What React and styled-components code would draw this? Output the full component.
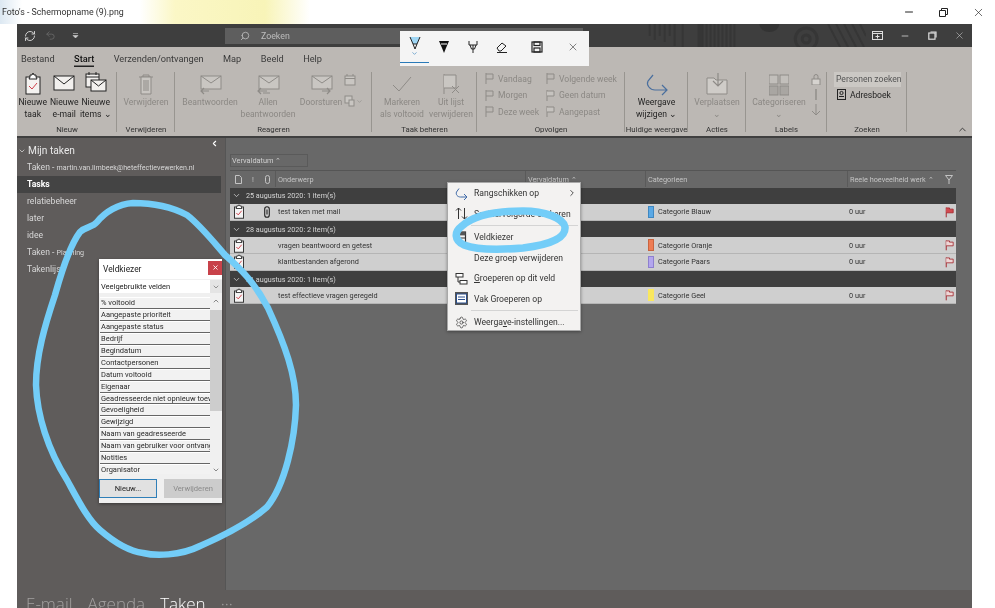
import styled, { createGlobalStyle } from "styled-components";
import { ChevronDown, ChevronLeft, ChevronRight, ChevronUp, Minus, RefreshCw, Search, Settings, Undo2, X } from "lucide-react";

const GlobalStyle = createGlobalStyle`
  html, body { margin: 0; padding: 0; background: #fff; }
  body { font-family: Roboto, "Liberation Sans", sans-serif; }
  * { box-sizing: border-box; }
`;

const Page = styled.div`
  position: relative;
  width: 995px;
  height: 608px;
  overflow: hidden;
  background: #fff;
  filter: blur(.3px);
`;

const PhotoBar = styled.div`
  height: 24px;
  display: flex;
  align-items: center;
  justify-content: space-between;
  padding: 0 10px 0 2px;
  color: #333;
  font-size: 8.8px;
  background: linear-gradient(90deg, #dce8f2 0, #fff 22px, #fff 140px, #fbf7c6 175px, #f8f4b8 265px, #fff 310px);
`;

const PhotoControls = styled.div`
  display: flex;
  align-items: center;
  gap: 23px;
  color: #222;
`;

const OutlookWindow = styled.div`
  width: 955px;
  height: 584px;
  margin-left: 17px;
  display: flex;
  flex-direction: column;
`;

const TitleBar = styled.div`
  height: 23px;
  flex: none;
  display: flex;
  align-items: center;
  background: #3e3e3e;
  color: #cfcfcf;
`;

const QuickTools = styled.div`
  width: 208px;
  padding-left: 7px;
  display: flex;
  align-items: center;
  gap: 9px;
`;

const SearchBox = styled.div`
  width: 358px;
  height: 16px;
  display: flex;
  align-items: center;
  gap: 11px;
  padding-left: 15px;
  background: #5e5e5e;
  color: #bdbdbd;
  font-size: 8.8px;
`;

const TitleArt = styled.svg`
  flex: 1;
  height: 23px;
`;

const TitleControls = styled.div`
  width: 106px;
  padding-left: 5.5px;
  display: flex;
  align-items: center;
  gap: 17.5px;
`;

const TabBar = styled.div`
  height: 23px;
  flex: none;
  display: flex;
  align-items: center;
  gap: 19.5px;
  padding-left: 4px;
  background: #bcb8b4;
`;

const Tab = styled.div`
  position: relative;
  font-size: 9.2px;
  line-height: 23px;
  color: ${(p) => (p.$active ? "#111" : "#3a3a3a")};
  font-weight: ${(p) => (p.$active ? 500 : 400)};
  ${(p) => p.$active && "box-shadow: inset 0 -3px 0 #bcb8b4, inset 0 -4.5px 0 #222;"}
`;

const Ribbon = styled.div`
  height: 68px;
  flex: none;
  display: flex;
  position: relative;
  background: #bcb8b4;
  border-bottom: 2px solid #3f3f3f;
`;

const Group = styled.div`
  width: ${(p) => p.$width}px;
  display: flex;
  flex-direction: column;
  padding: 2px 0 0;
  position: relative;

  &::after {
    content: "";
    position: absolute;
    right: 0;
    top: 2px;
    bottom: 4px;
    width: 1px;
    background: #989590;
  }
`;

const GroupBody = styled.div`
  flex: 1;
  display: flex;
  justify-content: ${(p) => p.$justify || "center"};
  padding-left: ${(p) => p.$pad || 0}px;
  gap: ${(p) => p.$gap || 0}px;
`;

const GroupLabel = styled.div`
  height: 12px;
  line-height: 12px;
  text-align: center;
  font-size: 7.8px;
  color: #333;
  white-space: nowrap;
`;

const BigButton = styled.div`
  width: ${(p) => p.$width || 31.5}px;
  display: flex;
  flex-direction: column;
  align-items: center;
  color: ${(p) => (p.$on ? "#1f1f1f" : "#8b8884")};
  font-size: 8.6px;
  line-height: 11.5px;
  text-align: center;
  white-space: nowrap;

  & > svg {
    flex: none;
    height: 24px;
    margin-bottom: 1px;
  }
`;

const SmallColumn = styled.div`
  display: flex;
  flex-direction: column;
  gap: ${(p) => p.$gap || 5}px;
  padding-top: ${(p) => p.$top || 0}px;
`;

const FlagRow = styled.div`
  height: 11.5px;
  display: flex;
  align-items: center;
  gap: 4px;
  font-size: 8.6px;
  color: #8b8884;
  white-space: nowrap;
`;

const PeopleInput = styled.div`
  width: 67px;
  height: 15px;
  background: #cbc8c4;
  font-size: 8.6px;
  line-height: 15px;
  padding-left: 2px;
  color: #555;
  white-space: nowrap;
`;

const AddressRow = styled.div`
  display: flex;
  align-items: center;
  gap: 4px;
  margin: 2px 0 0 3px;
  font-size: 8.6px;
  color: #222;
`;

const CollapseRibbon = styled.div`
  position: absolute;
  right: 4px;
  bottom: 1px;
  color: #333;
  display: flex;
`;

const Body = styled.div`
  flex: 1;
  display: flex;
  min-height: 0;
`;

const Sidebar = styled.div`
  width: 208px;
  flex: none;
  background: #5f5c5b;
  padding-top: 4px;
  position: relative;
`;

const SidebarToggle = styled.div`
  position: absolute;
  right: 6px;
  top: 1px;
  color: #fff;
  display: flex;
`;

const FolderHead = styled.div`
  height: 17px;
  display: flex;
  align-items: center;
  gap: 2px;
  padding-left: 1px;
  color: #e8e8e8;
  font-size: 10.2px;
`;

const FolderItem = styled.div`
  width: 204px;
  height: 17px;
  line-height: 17px;
  padding-left: 10px;
  font-size: 8.6px;
  white-space: nowrap;
  color: ${(p) => (p.$active ? "#fff" : "#d8d8d8")};
  background: ${(p) => (p.$active ? "#444" : "transparent")};
  font-weight: ${(p) => (p.$active ? 700 : 400)};
`;

const FolderNote = styled.span`
  font-size: 7.1px;
`;

const Main = styled.div`
  flex: 1;
  background: #686868;
  border-left: 1px solid #555;
  padding: 16px 0 0 4px;
`;

const SortBox = styled.div`
  width: 78px;
  height: 13px;
  line-height: 12px;
  padding-left: 1px;
  border: 1px solid #5a5a5a;
  color: #cfcfcf;
  font-size: 7.4px;
`;

const TableGrid = styled.div`
  display: grid;
  grid-template-columns: 17px 12px 16px 250px 120px 202px 94px 15px;
  width: 726px;
  align-items: center;
`;

const HeaderRow = styled(TableGrid)`
  height: 17.5px;
  margin-top: 3px;
  border-top: 1px solid #555;
  color: #c4c4c4;
  font-size: 7.3px;
`;

const HeaderCell = styled.div`
  height: 16px;
  line-height: 15px;
  padding-left: ${(p) => (p.$plain ? 0 : 2)}px;
  border-left: ${(p) => (p.$plain ? "none" : "1px solid #5a5a5a")};
  white-space: nowrap;
  display: flex;
  align-items: center;
  justify-content: ${(p) => (p.$center ? "center" : "flex-start")};
`;

const GroupRow = styled.div`
  width: 726px;
  height: 16.67px;
  display: flex;
  align-items: center;
  gap: 5px;
  padding-left: 2px;
  background: #3f3f3f;
  color: #d6d6d6;
  font-size: 7.2px;
`;

const TaskRow = styled(TableGrid)`
  height: 16.67px;
  background: #cfcfcf;
  color: #333;
  font-size: 7.3px;
  border-bottom: 1px solid #b5b5b5;
`;

const Cell = styled.div`
  display: flex;
  align-items: center;
  justify-content: ${(p) => (p.$center ? "center" : "flex-start")};
  gap: 4px;
  padding-left: ${(p) => p.$pad || 0}px;
  white-space: nowrap;
`;

const Swatch = styled.span`
  width: 6px;
  height: 12px;
  background: ${(p) => p.$color};
  border: 1px solid ${(p) => p.$edge};
`;

const BottomNav = styled.div`
  height: 18px;
  flex: none;
  display: flex;
  background: #5f5c5b;
  padding-left: 9px;
  overflow: hidden;
  gap: 15px;
`;

const NavLink = styled.div`
  font-family: "Open Sans", sans-serif;
  font-weight: 300;
  font-size: 17px;
  line-height: 27px;
  color: ${(p) => (p.$active ? "#fff" : "#a3a1a0")};
`;

const Annotation = styled.svg`
  position: absolute;
  left: 0;
  top: 0;
  width: 995px;
  height: 608px;
  pointer-events: none;
`;

const InkToolbar = styled.div`
  position: absolute;
  left: 400px;
  top: 31px;
  width: 189px;
  height: 35px;
  display: grid;
  grid-template-columns: 29px 29px 29px 29px 41px 32px;
  background: #f4f4f4;
`;

const InkTool = styled.div`
  display: flex;
  flex-direction: column;
  align-items: center;
  justify-content: center;
  height: 32px;
  color: #222;
  ${(p) => p.$active && "border-bottom: 1px solid #2a7ab8;"}
`;

const Dialog = styled.div`
  position: absolute;
  left: 99px;
  top: 259px;
  width: 123px;
  height: 244px;
  background: #f0f0f0;
  box-shadow: 0 1px 3px rgba(0, 0, 0, .4);
  display: flex;
  flex-direction: column;
`;

const DialogHead = styled.div`
  height: 20px;
  flex: none;
  display: flex;
  align-items: center;
  justify-content: space-between;
  padding-left: 4px;
  font-size: 8.4px;
  color: #222;
  background: #fff;
`;

const DialogClose = styled.div`
  width: 14px;
  height: 14px;
  margin: -3px 0 0;
  background: #c8424a;
  color: #fff;
  display: flex;
  align-items: center;
  justify-content: center;
`;

const DialogSelect = styled.div`
  height: 13px;
  flex: none;
  margin: 1px 0 4px;
  display: flex;
  justify-content: space-between;
  align-items: center;
  padding-left: 2px;
  background: #fff;
  font-size: 7.5px;
  color: #222;
`;

const SelectArrow = styled.div`
  width: 12px;
  height: 13px;
  background: #e4e4e4;
  color: #666;
  display: flex;
  align-items: center;
  justify-content: center;
`;

const FieldList = styled.div`
  height: 177px;
  flex: none;
  display: flex;
  overflow: hidden;
  margin-left: 1px;
`;

const Fields = styled.div`
  width: 110px;
  flex: none;
  overflow: hidden;
`;

const Field = styled.div`
  height: 11.94px;
  line-height: 10.5px;
  padding-left: 1px;
  font-size: 7.5px;
  color: #2a2a2a;
  background: #f2f2f2;
  border-top: 1px solid #fff;
  border-bottom: 1px solid #666;
  white-space: nowrap;
  overflow: hidden;
`;

const Scrollbar = styled.div`
  width: 12px;
  position: relative;
  color: #555;
  display: flex;
  flex-direction: column;
  justify-content: space-between;
  align-items: center;
  background: #f0f0f0;
`;

const ScrollThumb = styled.div`
  position: absolute;
  left: 0;
  right: 0;
  top: 13px;
  height: 101px;
  background: #cdcdcd;
`;

const DialogButtons = styled.div`
  display: flex;
  justify-content: space-between;
  padding-top: 5px;
  height: 25px;
`;

const DialogButton = styled.div`
  width: 58px;
  height: 19px;
  line-height: 17px;
  text-align: center;
  font-size: 7.6px;
  color: ${(p) => (p.$primary ? "#222" : "#8a8a8a")};
  background: ${(p) => (p.$primary ? "#e1e1e1" : "#cccccc")};
  border: 1px solid ${(p) => (p.$primary ? "#2f7fb8" : "#cccccc")};
`;

const ContextMenu = styled.div`
  position: absolute;
  left: 447px;
  top: 182px;
  width: 134px;
  height: 149px;
  background: #f3f2f1;
  border: 1px solid #a8a8a8;
  box-shadow: 0 1px 3px rgba(0, 0, 0, .35);
`;

const MenuItem = styled.div`
  height: 20.5px;
  display: flex;
  align-items: center;
  gap: 6px;
  padding-left: 7px;
  font-size: 8.6px;
  color: #333;
  white-space: nowrap;
  position: relative;

  & > svg:first-child {
    flex: none;
    width: 13px;
    height: 13px;
  }
`;

const MenuSpacer = styled.span`
  width: 13px;
  flex: none;
`;

const MenuArrow = styled.span`
  position: absolute;
  right: 3px;
  display: flex;
  color: #333;
`;

const MenuRule = styled.div`
  height: 1px;
  margin: 1px 2px 1px 23px;
  background: #d4d4d4;
`;

const grey = "#8e8b87";
const greyFill = "#c9c6c2";

const TaskIcon = ({ size = 12 }) => (
  <svg width={size} height={size * 1.25} viewBox="0 0 16 20">
    <rect x="2" y="4" width="12" height="15" fill="#f4f4f4" stroke="#333" strokeWidth="1.3" />
    <path d="M5 4V2.5h2L8 1l1 1.5h2V4l1 2H4z" fill="#fff" stroke="#333" strokeWidth="1.2" />
    <path d="M4.5 12l2.5 2.5L11.5 9" fill="none" stroke="#d0404a" strokeWidth="1.3" />
  </svg>
);

const Envelope = ({ width = 22, stroke = "#222", fill = "#f2f0ee" }) => (
  <svg width={width} height="24" viewBox="0 0 22 24">
    <rect x="1" y="4" width="20" height="14" fill={fill} stroke={stroke} />
    <path d="M1 4l10 8 10-8" fill="none" stroke={stroke} />
  </svg>
);

const ReplyMail = ({ doors, double }) => (
  <svg width="24" height="24" viewBox="0 0 24 24">
    <rect x="3" y="4" width="20" height="13" fill={greyFill} stroke={grey} />
    <path d="M3 4l10 7 10-7" fill="none" stroke={grey} />
    {doors ? (
      <path d="M13 19h8m-3-3l3 3-3 3" fill="none" stroke={grey} strokeWidth="1.2" />
    ) : (
      <path d={double ? "M11 19H2m3-3l-3 3 3 3M14 21H7" : "M11 19H3m3-3l-3 3 3 3"} fill="none" stroke={grey} strokeWidth="1.2" />
    )}
  </svg>
);

const FlagSmall = ({ box }) => (
  <svg width="9" height="11" viewBox="0 0 9 11">
    <path d="M1 0v11" stroke={grey} />
    <path d="M1 1h7v5H1" fill={box ? "#c6c3bf" : "none"} stroke={grey} />
  </svg>
);

const RowFlag = ({ solid }) => (
  <svg width="9" height="12" viewBox="0 0 11 13">
    <path d="M1.5 1v12" stroke="#a4262c" strokeWidth="1.2" />
    <path d="M1.5 1.5h4v1.5h4.5v4.5H1.5" fill={solid ? "#d24a50" : "#eed6d6"} stroke="#a4262c" />
  </svg>
);

const FieldChooserIcon = () => (
  <svg viewBox="0 0 13 13">
    <rect x="2.5" y="1" width="8" height="11" fill="#f4f4f4" stroke="#333" strokeWidth="1.2" />
    <rect x="2.5" y="1" width="8" height="3.4" fill="#555" />
    <path d="M2.5 7h8M5 9.5h3" stroke="#333" />
  </svg>
);

const fields = [
  "% voltooid",
  "Aangepaste prioriteit",
  "Aangepaste status",
  "Bedrijf",
  "Begindatum",
  "Contactpersonen",
  "Datum voltooid",
  "Eigenaar",
  "Geadresseerde niet opnieuw toewijzen",
  "Gevoeligheid",
  "Gewijzigd",
  "Naam van geadresseerde",
  "Naam van gebruiker voor ontvangst",
  "Notities",
  "Organisator",
  "",
];

const folders = ["relatiebeheer", "later", "idee"];

const groups = [
  {
    title: "25 augustus 2020: 1 item(s)",
    rows: [{ subject: "test taken met mail", clip: true, category: "Categorie Blauw", color: "#5aa9e6", edge: "#3f87c0", solid: true }],
  },
  {
    title: "28 augustus 2020: 2 item(s)",
    rows: [
      { subject: "vragen beantwoord en getest", category: "Categorie Oranje", color: "#ee7d55", edge: "#c9643f" },
      { subject: "klantbestanden afgerond", category: "Categorie Paars", color: "#b3a6ee", edge: "#8e80cf" },
    ],
  },
  {
    title: "31 augustus 2020: 1 item(s)",
    rows: [{ subject: "test effectieve vragen geregeld", category: "Categorie Geel", color: "#f9e75e", edge: "#f9e75e" }],
  },
];

export default function App() {
  return (
    <Page>
      <GlobalStyle />
      <PhotoBar>
        <span>Foto's - Schermopname (9).png</span>
        <PhotoControls>
          <Minus size={12} />
          <svg width="11" height="11" viewBox="0 0 11 11" fill="none" stroke="#222">
            <path d="M1.5 3.5h6v6h-6zM3.5 3.5v-2h6v6h-2" />
          </svg>
          <X size={13} strokeWidth={1.2} />
        </PhotoControls>
      </PhotoBar>

      <OutlookWindow>
        <TitleBar>
          <QuickTools>
            <RefreshCw size={12} />
            <Undo2 size={11} color="#666" />
            <svg width="9" height="9" viewBox="0 0 9 9" style={{ marginLeft: 6 }}>
              <path d="M2 2.5h5M2 4.5h5L4.5 7z" fill="#ccc" stroke="#ccc" strokeWidth=".6" />
            </svg>
          </QuickTools>
          <SearchBox>
            <Search size={10} style={{ transform: "scaleX(-1)" }} />
            Zoeken
          </SearchBox>
          <TitleArt viewBox="0 0 284 23" preserveAspectRatio="none">
            <g stroke="#363636" strokeWidth="2" fill="none">
              <path d="M67 0v12M72 0v16M77 0v12M82 0v18M87 0v12M92 0v22M100 0v23" />
              <path d="M120 0v23M124 0v23M128 0v23M132 0v23M136 0v23M140 0v23M144 0v23M148 0v23M152 0v23" />
              <circle cx="224" cy="15" r="11" strokeWidth="3" />
              <circle cx="224" cy="15" r="4" strokeWidth="3" />
              <path d="M246 0l12 23M254 0l12 23M262 0l12 23M270 0l12 23M278 0l6 12" />
            </g>
            <path d="M115 0h5v23h-5z" fill="#363636" />
            <path d="M177 0h20a10 8 0 0 1-20 0z" fill="#333" />
          </TitleArt>
          <TitleControls>
            <svg width="11" height="9" viewBox="0 0 11 9" fill="none" stroke="#ddd">
              <rect x=".5" y=".5" width="10" height="8" />
              <path d="M.5 2.5h10M5.5 3.5v4M3.5 5.5h4" />
            </svg>
            <Minus size={10} />
            <svg width="9" height="9" viewBox="0 0 9 9" fill="none" stroke="#ddd" strokeWidth="1.2">
              <rect x=".8" y="2" width="6.2" height="6.2" />
              <path d="M2.5 1h5.5v5.5" />
            </svg>
            <X size={11} strokeWidth={1.2} />
          </TitleControls>
        </TitleBar>

        <TabBar>
          <Tab>Bestand</Tab>
          <Tab $active>Start</Tab>
          <Tab>Verzenden/ontvangen</Tab>
          <Tab>Map</Tab>
          <Tab>Beeld</Tab>
          <Tab>Help</Tab>
        </TabBar>

        <Ribbon>
          <Group $width={100}>
            <GroupBody $justify="flex-start">
              <BigButton $on>
                <svg width="18" height="24" viewBox="0 0 18 24">
                  <rect x="2" y="5" width="14" height="17" fill="#f4f2f0" stroke="#222" />
                  <path d="M6 5V3h2l1-2 1 2h2v2l1 2H5z" fill="#fff" stroke="#222" />
                  <path d="M5 14l3 3 5-6" fill="none" stroke="#d0404a" />
                </svg>
                Nieuwe
                <br />
                taak
              </BigButton>
              <BigButton $on>
                <Envelope />
                Nieuwe
                <br />
                e-mail
              </BigButton>
              <BigButton $on>
                <svg width="22" height="24" viewBox="0 0 22 24">
                  <rect x="1" y="2" width="13" height="13" fill="#f2f0ee" stroke="#222" />
                  <path d="M1 5h13M4 0v3M11 0v3" stroke="#222" />
                  <rect x="6" y="8" width="15" height="11" fill="#f2f0ee" stroke="#222" />
                  <path d="M6 8l7.5 6L21 8" fill="none" stroke="#222" />
                </svg>
                Nieuwe
                <br />
                items ⌄
              </BigButton>
            </GroupBody>
            <GroupLabel>Nieuw</GroupLabel>
          </Group>

          <Group $width={58}>
            <GroupBody>
              <BigButton $width={50}>
                <svg width="16" height="24" viewBox="0 0 16 24">
                  <path d="M1 5h14M5 5V3h6v2" fill="none" stroke={grey} />
                  <path d="M3 5v17h10V5z" fill={greyFill} stroke={grey} />
                  <path d="M6 8v11M8 8v11M10 8v11" stroke={grey} />
                </svg>
                Verwijderen
              </BigButton>
            </GroupBody>
            <GroupLabel>Verwijderen</GroupLabel>
          </Group>

          <Group $width={197}>
            <GroupBody $justify="flex-start" $pad={7}>
              <BigButton $width={56}>
                <ReplyMail />
                Beantwoorden
              </BigButton>
              <BigButton $width={60}>
                <ReplyMail double />
                Allen
                <br />
                beantwoorden
              </BigButton>
              <BigButton $width={46}>
                <ReplyMail doors />
                Doorsturen
              </BigButton>
              <SmallColumn $gap={9} $top={2}>
                <svg width="12" height="12" viewBox="0 0 12 12" fill={greyFill} stroke={grey}>
                  <rect x="1" y="2" width="10" height="9" />
                  <path d="M1 4.5h10M3 0v2M9 0v2" />
                </svg>
                <span style={{ display: "flex", alignItems: "center", color: grey }}>
                  <svg width="12" height="12" viewBox="0 0 12 12" fill={greyFill} stroke={grey}>
                    <rect x="1" y="1" width="7" height="7" />
                    <rect x="5" y="5" width="5" height="6" />
                  </svg>
                  <ChevronDown size={7} />
                </span>
              </SmallColumn>
            </GroupBody>
            <GroupLabel>Reageren</GroupLabel>
          </Group>

          <Group $width={105}>
            <GroupBody $justify="flex-start" $pad={3}>
              <BigButton $width={54}>
                <svg width="22" height="24" viewBox="0 0 22 24">
                  <path d="M2 13l6 6L20 5" fill="none" stroke={grey} />
                </svg>
                Markeren
                <br />
                als voltooid
              </BigButton>
              <BigButton $width={44}>
                <svg width="22" height="24" viewBox="0 0 22 24">
                  <path d="M4 2v20" stroke={grey} />
                  <path d="M4 3h12v13H4" fill={greyFill} stroke={grey} />
                  <path d="M12 14l7 7m0-7l-7 7" stroke={grey} />
                </svg>
                Uit lijst
                <br />
                verwijderen
              </BigButton>
            </GroupBody>
            <GroupLabel>Taak beheren</GroupLabel>
          </Group>

          <Group $width={148}>
            <GroupBody $justify="flex-start" $pad={8} $gap={7}>
              <SmallColumn $top={1}>
                <FlagRow><FlagSmall />Vandaag</FlagRow>
                <FlagRow><FlagSmall />Morgen</FlagRow>
                <FlagRow><FlagSmall />Deze week</FlagRow>
              </SmallColumn>
              <SmallColumn $top={1}>
                <FlagRow><FlagSmall />Volgende week</FlagRow>
                <FlagRow><FlagSmall box />Geen datum</FlagRow>
                <FlagRow><FlagSmall box />Aangepast</FlagRow>
              </SmallColumn>
            </GroupBody>
            <GroupLabel>Opvolgen</GroupLabel>
          </Group>

          <Group $width={63}>
            <GroupBody>
              <BigButton $on $width={60}>
                <svg width="24" height="24" viewBox="0 0 24 24">
                  <path d="M8 3L3 9c-2 4 2 9 7 9h12m-5-5l5 5-5 5" fill="none" stroke="#4a6f9e" strokeWidth="1.2" />
                </svg>
                Weergave
                <br />
                wijzigen ⌄
              </BigButton>
            </GroupBody>
            <GroupLabel>Huidige weergave</GroupLabel>
          </Group>

          <Group $width={58}>
            <GroupBody>
              <BigButton $width={54}>
                <svg width="22" height="24" viewBox="0 0 22 24">
                  <path d="M1 6h7l2 2h11v14H1z" fill="#cfccc8" stroke={grey} />
                  <path d="M12 1v13m-5-5l5 5 5-5" fill="none" stroke={grey} strokeWidth="1.2" />
                </svg>
                Verplaatsen
                <br />⌄
              </BigButton>
            </GroupBody>
            <GroupLabel>Acties</GroupLabel>
          </Group>

          <Group $width={81}>
            <GroupBody $justify="flex-start" $pad={5} $gap={4}>
              <BigButton $width={56}>
                <svg width="20" height="24" viewBox="0 0 20 24">
                  <rect x="0" y="3" width="9" height="9" fill="#c2bfbb" stroke={grey} />
                  <rect x="11" y="3" width="9" height="9" fill="#c2bfbb" stroke={grey} />
                  <rect x="0" y="14" width="9" height="9" fill="#a9a6a2" stroke={grey} />
                  <rect x="11" y="14" width="9" height="9" fill="#a9a6a2" stroke={grey} />
                </svg>
                Categoriseren
                <br />⌄
              </BigButton>
              <SmallColumn $gap={4} $top={2}>
                <svg width="10" height="11" viewBox="0 0 10 11" fill="#d6d3cf" stroke={grey}>
                  <rect x="1" y="5" width="8" height="6" />
                  <path d="M3 5V2.5a2 2 0 0 1 4 0V5" fill="none" />
                </svg>
                <svg width="10" height="11" viewBox="0 0 10 11" fill="none" stroke={grey}><path d="M5 0v11" strokeWidth="1.4" /></svg>
                <svg width="10" height="12" viewBox="0 0 10 12" fill="none" stroke={grey}><path d="M5 0v11M1 7l4 4 4-4" /></svg>
              </SmallColumn>
            </GroupBody>
            <GroupLabel>Labels</GroupLabel>
          </Group>

          <Group $width={80}>
            <GroupBody $justify="flex-start" $pad={7}>
              <div>
                <PeopleInput>Personen zoeken</PeopleInput>
                <AddressRow>
                  <svg width="9" height="11" viewBox="0 0 9 11" fill="none" stroke="#222">
                    <rect x=".5" y=".5" width="8" height="10" />
                    <circle cx="4.5" cy="4" r="1.6" />
                    <path d="M2 7.5h5" />
                  </svg>
                  Adresboek
                </AddressRow>
              </div>
            </GroupBody>
            <GroupLabel>Zoeken</GroupLabel>
          </Group>

          <CollapseRibbon>
            <ChevronUp size={11} />
          </CollapseRibbon>
        </Ribbon>

        <Body>
          <Sidebar>
            <SidebarToggle>
              <ChevronLeft size={9} strokeWidth={3} />
            </SidebarToggle>
            <FolderHead>
              <ChevronDown size={8} />
              Mijn taken
            </FolderHead>
            <FolderItem>Taken - <FolderNote>martin.van.limbeek@heteffectievewerken.nl</FolderNote></FolderItem>
            <FolderItem $active>Tasks</FolderItem>
            {folders.map((name) => (
              <FolderItem key={name}>{name}</FolderItem>
            ))}
            <FolderItem>Taken - <FolderNote>Planning</FolderNote></FolderItem>
            <FolderItem>Takenlijst</FolderItem>
          </Sidebar>

          <Main>
            <SortBox>Vervaldatum ⌃</SortBox>
            <HeaderRow>
              <HeaderCell $plain $center>
                <svg width="7" height="9" viewBox="0 0 7 9" fill="none" stroke="#c4c4c4"><path d="M.5.5h4l2 2v6h-6z" /></svg>
              </HeaderCell>
              <HeaderCell $plain $center>!</HeaderCell>
              <HeaderCell $plain $center>
                <svg width="5" height="9" viewBox="0 0 5 9" fill="none" stroke="#c4c4c4"><rect x=".5" y=".5" width="4" height="8" rx="2" /></svg>
              </HeaderCell>
              <HeaderCell>Onderwerp</HeaderCell>
              <HeaderCell>Vervaldatum ⌃</HeaderCell>
              <HeaderCell>Categorieen</HeaderCell>
              <HeaderCell>Reele hoeveelheid werk ⌃</HeaderCell>
              <HeaderCell $plain $center>
                <svg width="8" height="9" viewBox="0 0 8 9" fill="none" stroke="#c4c4c4"><path d="M.5.5h7L4 5zM4 5v4" /></svg>
              </HeaderCell>
            </HeaderRow>

            {groups.map((group) => (
              <div key={group.title}>
                <GroupRow>
                  <ChevronDown size={9} />
                  {group.title}
                </GroupRow>
                {group.rows.map((row) => (
                  <TaskRow key={row.subject}>
                    <Cell $center><TaskIcon /></Cell>
                    <Cell />
                    <Cell $center>
                      {row.clip && (
                        <svg width="6" height="12" viewBox="0 0 6 12" fill="none" stroke="#222" strokeWidth="1.1">
                          <rect x=".7" y=".7" width="4.6" height="10.6" rx="2.3" />
                          <path d="M3 3.5v5" />
                        </svg>
                      )}
                    </Cell>
                    <Cell $pad={3}>{row.subject}</Cell>
                    <Cell />
                    <Cell $pad={3}>
                      <Swatch $color={row.color} $edge={row.edge} />
                      {row.category}
                    </Cell>
                    <Cell $pad={2}>0 uur</Cell>
                    <Cell $pad={4}><RowFlag solid={row.solid} /></Cell>
                  </TaskRow>
                ))}
              </div>
            ))}
          </Main>
        </Body>

        <BottomNav>
          <NavLink>E-mail</NavLink>
          <NavLink>Agenda</NavLink>
          <NavLink $active>Taken</NavLink>
          <NavLink>···</NavLink>
        </BottomNav>
      </OutlookWindow>

      <InkToolbar>
        <InkTool $active>
          <svg width="12" height="14" viewBox="0 0 12 14">
            <path d="M1 1h10L8 8H4z" fill="#9fd6f4" />
            <path d="M1 1l3 7h4l3-7M4 8l2 5 2-5" fill="none" stroke="#222" />
          </svg>
          <ChevronDown size={7} color="#2a7ab8" />
        </InkTool>
        <InkTool>
          <svg width="12" height="14" viewBox="0 0 12 14">
            <path d="M1 1h10L8 8l-2 5-2-5z" fill="#111" />
            <path d="M3 4h6" stroke="#fff" />
          </svg>
        </InkTool>
        <InkTool>
          <svg width="10" height="14" viewBox="0 0 10 14" fill="none" stroke="#222">
            <path d="M1 1v4h8V1M2 5l1.5 4h3L8 5M5 5v8" />
          </svg>
        </InkTool>
        <InkTool>
          <svg width="12" height="12" viewBox="0 0 12 12" fill="none" stroke="#222">
            <path d="M1 7l5-5 4 3-5 5H3zM1 11.5h10" />
          </svg>
        </InkTool>
        <InkTool>
          <svg width="12" height="12" viewBox="0 0 12 12" fill="none" stroke="#222" strokeWidth="1.2">
            <rect x="1" y="1" width="10" height="10" />
            <rect x="3" y="1" width="6" height="3.5" />
            <rect x="3" y="7" width="6" height="4" />
          </svg>
        </InkTool>
        <InkTool>
          <X size={12} strokeWidth={1.1} />
        </InkTool>
      </InkToolbar>

      <Dialog>
        <DialogHead>
          Veldkiezer
          <DialogClose><X size={7} strokeWidth={3} /></DialogClose>
        </DialogHead>
        <DialogSelect>
          Veelgebruikte velden
          <SelectArrow><ChevronDown size={8} /></SelectArrow>
        </DialogSelect>
        <FieldList>
          <Fields>
            {fields.map((name, index) => (
              <Field key={index}>{name}</Field>
            ))}
          </Fields>
          <Scrollbar>
            <ScrollThumb />
            <ChevronUp size={8} />
            <ChevronDown size={8} />
          </Scrollbar>
        </FieldList>
        <DialogButtons>
          <DialogButton $primary>Nieuw...</DialogButton>
          <DialogButton>Verwijderen</DialogButton>
        </DialogButtons>
      </Dialog>

      <ContextMenu>
        <MenuItem>
          <svg viewBox="0 0 13 13" fill="none" stroke="#3f6aa8">
            <path d="M4 1.5L1.5 5c-1 2.5 1 5 4 5h6.5m-3-3l3 3-3 3" />
          </svg>
          Rangschikken op
          <MenuArrow><ChevronRight size={10} /></MenuArrow>
        </MenuItem>
        <MenuItem>
          <svg viewBox="0 0 13 13" fill="none" stroke="#333">
            <path d="M3.5 12V1M1 3.5L3.5 1 6 3.5M9.5 1v11M7 9.5L9.5 12 12 9.5" />
          </svg>
          Sorteervolgorde omkeren
        </MenuItem>
        <MenuRule />
        <MenuItem>
          <FieldChooserIcon />
          Veldkiezer
        </MenuItem>
        <MenuItem>
          <MenuSpacer />
          Deze groep verwijderen
        </MenuItem>
        <MenuItem>
          <svg viewBox="0 0 13 13" fill="#fff" stroke="#333">
            <rect x="1" y="1.5" width="7" height="3.5" />
            <rect x="5" y="8.5" width="7" height="3.5" />
            <path d="M3 5v5h2" fill="none" />
          </svg>
          <span><u>G</u>roeperen op dit veld</span>
        </MenuItem>
        <MenuItem>
          <svg viewBox="0 0 13 13">
            <rect x="0" y="0" width="13" height="13" fill="#555" />
            <rect x="1.5" y="2" width="10" height="9" fill="#fff" stroke="#2b4f8c" />
            <path d="M3 5h7M3 7.5h7" stroke="#2b4f8c" />
          </svg>
          Vak Groeperen op
        </MenuItem>
        <MenuRule />
        <MenuItem>
          <Settings size={13} strokeWidth={1.3} />
          <span>Weerga<u>v</u>e-instellingen...</span>
        </MenuItem>
      </ContextMenu>

      <Annotation viewBox="0 0 995 608" fill="none" stroke="#73cdf8" strokeLinecap="round" strokeLinejoin="round">
        <path
          strokeWidth="6.5"
          d="M97 222C92 228 86 226 80 232C70 245 62 270 55 295C45 325 36 355 36 385C37 415 48 450 67 480C78 500 88 520 100 530C115 543 128 551 143 553C155 556 180 556 200 546C225 535 250 522 267 507C285 485 295 440 296 405C296 375 285 345 268 308C255 283 240 268 225 255C212 240 200 225 187 215C170 206 150 203 133 203C118 204 105 212 97 222Z"
        />
        <path
          strokeWidth="7.5"
          d="M462 226C472 217 492 211 523 211C545 211 563 218 565 227C566 238 550 245 523 248C500 250 477 250 464 245C454 240 454 232 462 226Z"
        />
      </Annotation>
    </Page>
  );
}
